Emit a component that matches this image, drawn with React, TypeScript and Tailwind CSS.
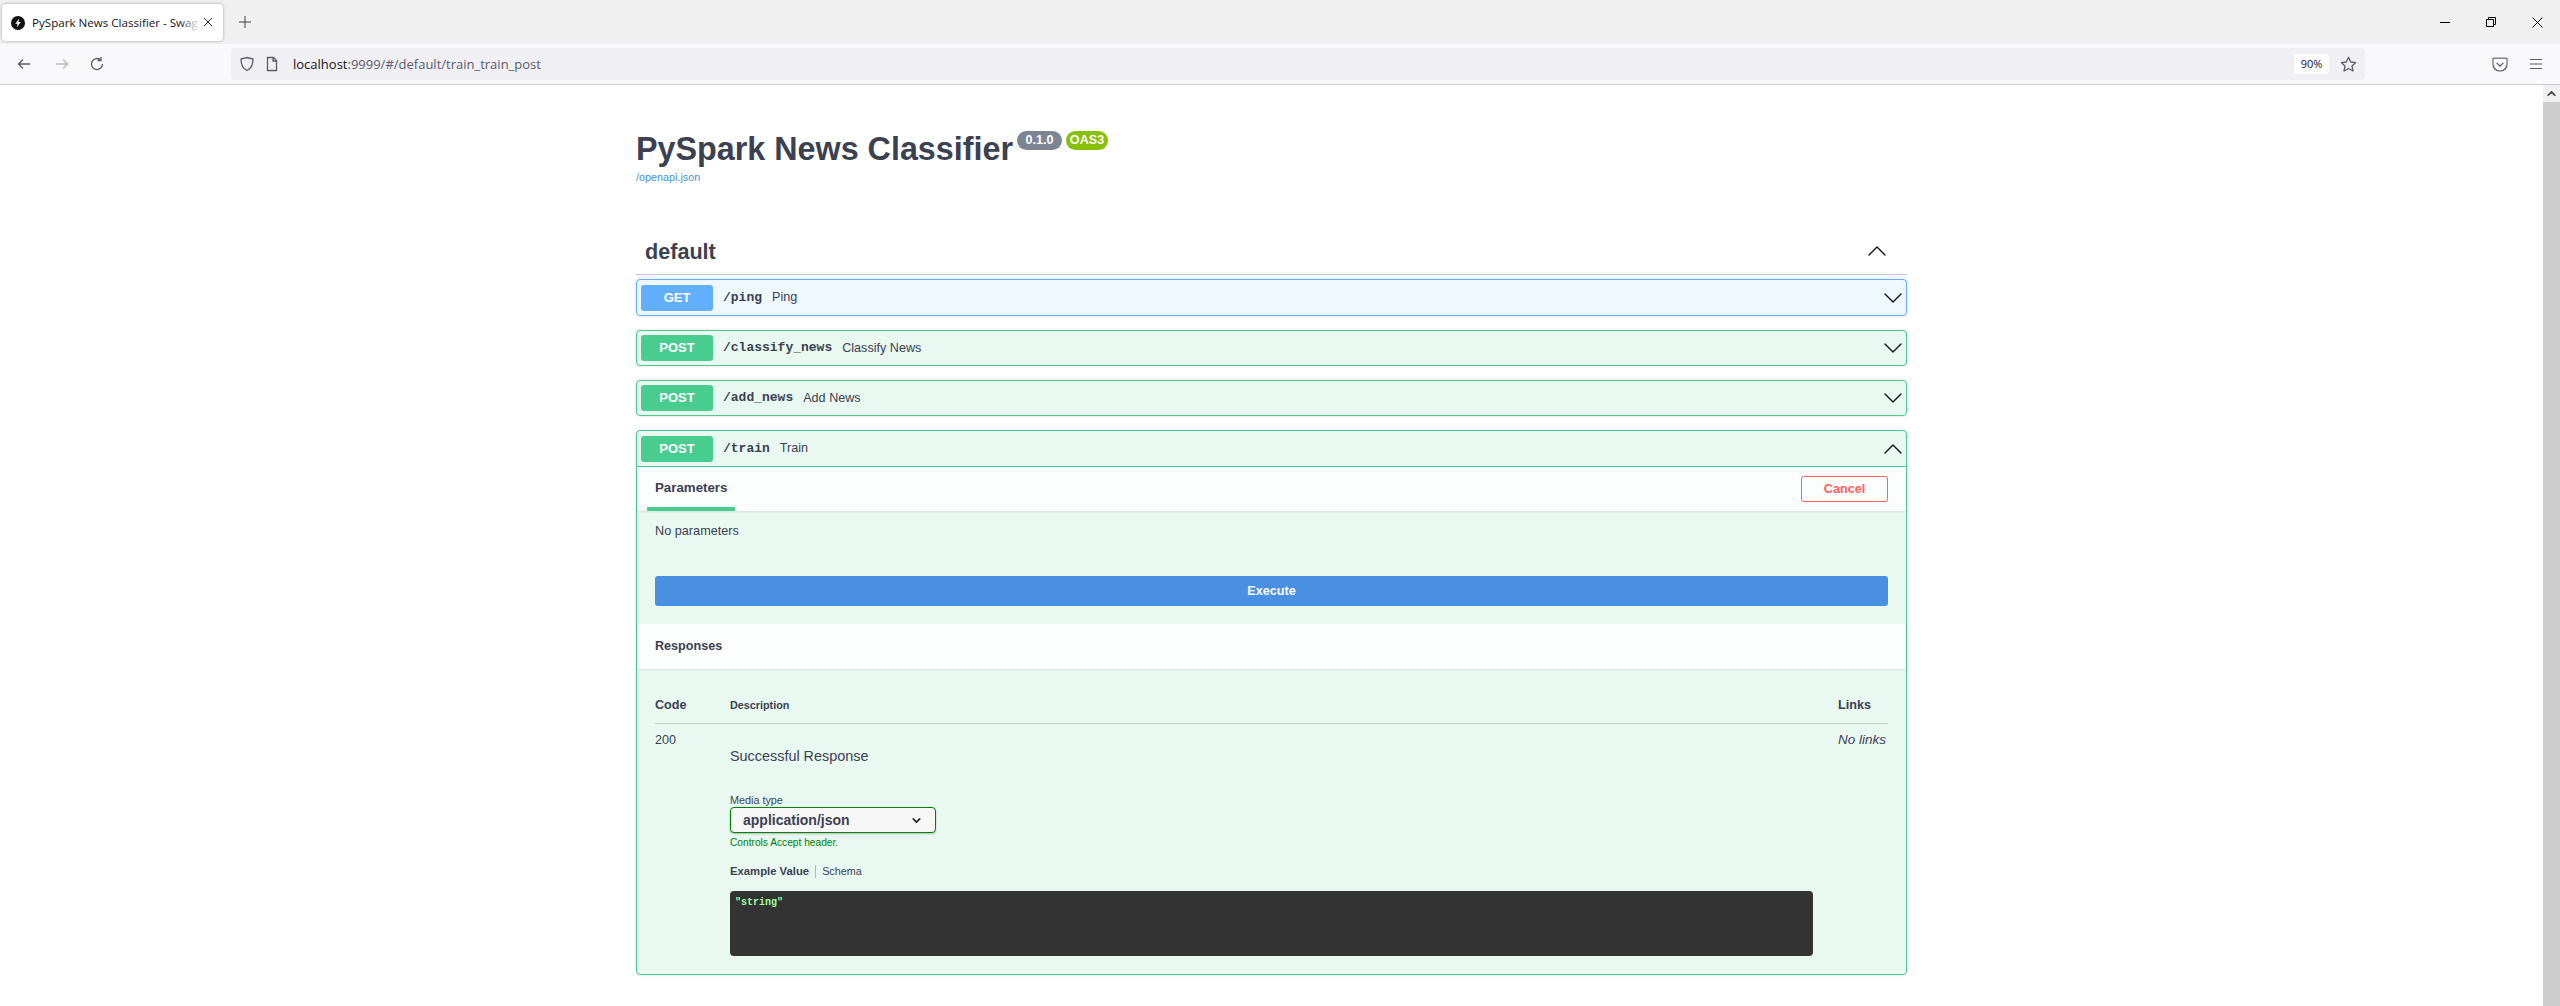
import { ChevronDown, ChevronUp } from "lucide-react";

const sans = "font-['Liberation_Sans',Arial,sans-serif]";
const ui = "font-['Open_Sans','Noto_Sans',sans-serif]";

function Favicon() {
  return (
    <svg width="14" height="14" viewBox="0 0 14 14" className="shrink-0">
      <circle cx="7" cy="7" r="7" fill="#111" />
      <path d="M8.2 2.4 4.2 7.8h2.4l-.9 3.8 4.1-5.5H7.4z" fill="#fff" />
    </svg>
  );
}

function BrowserChrome() {
  return (
    <div className="shrink-0">
      <div className="flex h-[44px] items-start bg-[#f0f0f0]">
        <div className="relative mt-[4px] ml-[2px] flex h-[37px] w-[221px] items-center rounded-[4px] bg-white pl-[9px] shadow-[0_0_3px_rgba(0,0,0,0.35)]">
          <Favicon />
          <span className={`ml-[7px] w-[168px] overflow-hidden text-[11.600px] whitespace-nowrap text-[#15141a] ${ui}`}>
            PySpark News Classifier - Swagger UI
          </span>
          <div className="absolute top-0 left-[178px] h-full w-[20px] bg-gradient-to-r from-transparent to-white" />
          <svg width="10" height="10" viewBox="0 0 10 10" className="absolute top-[13px] left-[201px]">
            <path d="M1 1l8 8M9 1l-8 8" stroke="#2b2a33" strokeWidth="1" fill="none" />
          </svg>
        </div>
        <svg width="12" height="12" viewBox="0 0 12 12" className="mt-[16px] ml-[16px]">
          <path d="M6 0v12M0 6h12" stroke="#444" strokeWidth="1" fill="none" />
        </svg>
        <div className="flex-1" />
        <div className="flex h-[44px] items-center">
          <div className="flex w-[46px] justify-center">
            <div className="h-px w-[10px] bg-black" />
          </div>
          <div className="flex w-[46px] justify-center">
            <svg width="10" height="10" viewBox="0 0 10 10">
              <path d="M.5 2.5h7v7h-7zM2.5 2.5v-2h7v7h-2" stroke="#000" fill="none" />
            </svg>
          </div>
          <div className="flex w-[46px] justify-center">
            <svg width="11" height="11" viewBox="0 0 11 11">
              <path d="M.5.5l10 10M10.5.5l-10 10" stroke="#000" fill="none" />
            </svg>
          </div>
        </div>
      </div>
      <div className="flex h-[41px] items-start border-b border-[#cccccc] bg-[#f9f9fb]">
        <div className="flex h-[40px] w-[231px] items-center">
          <svg width="16" height="16" viewBox="0 0 16 16" className="ml-[16px]">
            <path d="M14 8H2.5M7 3.5 2.5 8 7 12.500" stroke="#5b5b66" strokeWidth="1.300" fill="none" />
          </svg>
          <svg width="16" height="16" viewBox="0 0 16 16" className="ml-[22px]">
            <path d="M2 8h11.500M9 3.500 13.500 8 9 12.500" stroke="#b8b8bf" strokeWidth="1.300" fill="none" />
          </svg>
          <svg width="16" height="16" viewBox="0 0 16 16" className="ml-[19px]">
            <path d="M13.500 8A5.500 5.500 0 1 1 11.500 3.800M12 1v3.500H8.500" stroke="#5b5b66" strokeWidth="1.300" fill="none" />
          </svg>
        </div>
        <div className="mt-[4px] flex h-[32px] w-[2134px] items-center rounded-[4px] bg-[#f0f0f4]">
          <svg width="16" height="16" viewBox="0 0 16 16" className="ml-[8px]">
            <path d="M8 1.500 14 3c0 6-1.500 9.500-6 11.500C3.500 12.500 2 9 2 3z" stroke="#5b5b66" strokeWidth="1.300" fill="none" />
          </svg>
          <svg width="14" height="16" viewBox="0 0 14 16" className="ml-[10px]">
            <path d="M2.500 1.500h6l3 3v10h-9zM8 1.500V5h3.500" stroke="#5b5b66" strokeWidth="1.300" fill="none" />
          </svg>
          <span className={`mt-[1px] ml-[14px] text-[13px] text-[#5b5b66] ${ui}`}>
            <span className="text-[#15141a]">localhost</span>:9999/#/default/train_train_post
          </span>
          <div className="flex-1" />
          <span className={`flex h-[20px] w-[35px] items-center justify-center rounded-[3px] bg-white text-[11px] text-[#15141a] ${ui}`}>
            90%
          </span>
          <svg width="17" height="17" viewBox="0 0 17 17" className="mr-[8px] ml-[11px]">
            <path d="M8.500 1.300 10.700 6l5 .600-3.700 3.400 1 5-4.500-2.500L4 15l1-5-3.700-3.400 5-.600z" stroke="#5b5b66" strokeWidth="1.300" fill="none" strokeLinejoin="round" />
          </svg>
        </div>
        <div className="flex h-[40px] flex-1 items-center">
          <svg width="14" height="13" viewBox="0 0 14 13" className="ml-[128px] scale-[1.100]">
            <path d="M1.500.700h11a1 1 0 0 1 1 1V6A6.500 6.500 0 0 1 .5 6V1.700a1 1 0 0 1 1-1zM4 5l3 3 3-3" stroke="#5b5b66" strokeWidth="1.200" fill="none" />
          </svg>
          <svg width="14" height="12" viewBox="0 0 14 12" className="ml-[22px]">
            <path d="M1 1.500h12M1 6h12M1 10.500h12" stroke="#5b5b66" strokeWidth="1.200" fill="none" />
          </svg>
        </div>
      </div>
    </div>
  );
}

function OpRow({
  method,
  path,
  summary,
  open,
  className,
}: {
  method: string;
  path: string;
  summary: string;
  open?: boolean;
  className: string;
}) {
  const isGet = method === "GET";
  return (
    <div className={`flex items-center pl-[4px] ${className}`}>
      <span
        className={`flex h-[26px] w-[72px] items-center justify-center rounded-[3px] text-[13px] font-bold text-white ${
          isGet ? "bg-[#61affe]" : "bg-[#49cc90]"
        }`}
      >
        {method}
      </span>
      <span className="ml-[10px] font-['Liberation_Mono',monospace] text-[13px] font-bold text-[#3b4151]">{path}</span>
      <span className="ml-[10px] text-[12.600px] text-[#3b4151]">{summary}</span>
      <div className="flex-1" />
      {open ? (
        <ChevronUp size={32} strokeWidth={1} color="#111" className="-mr-[3px]" />
      ) : (
        <ChevronDown size={32} strokeWidth={1} color="#111" className="-mr-[3px]" />
      )}
    </div>
  );
}

function TrainPanel() {
  return (
    <div className="mt-[14px] rounded-[4px] border border-[#49cc90] bg-[#e9f9f2] shadow-[0_0_3px_rgba(0,0,0,0.15)]">
      <OpRow method="POST" path="/train" summary="Train" open className="h-[36px] border-b border-[#49cc90]" />
      <div className="flex h-[44px] items-stretch justify-between bg-[#fbfefd] pr-[18px] pl-[10px] shadow-[0_1px_2px_rgba(0,0,0,0.1)]">
        <div className="flex w-[88px] items-center border-b-[4px] border-[#49cc90] pt-[1px] pl-[8px] text-[13.300px] font-bold text-[#3b4151]">
          Parameters
        </div>
        <div className="flex items-center">
          <button className="h-[26px] w-[87px] rounded-[3px] border border-[#ff6060] bg-transparent text-[12.600px] font-bold text-[#ff6060]">
            Cancel
          </button>
        </div>
      </div>
      <div className="px-[18px]">
        <p className="pt-[12px] text-[12.700px] leading-[16px] text-[#3b4151]">No parameters</p>
        <button className="mt-[37px] mb-[18px] block h-[30px] w-full rounded-[3px] bg-[#4990e2] text-[12.600px] font-bold text-white">
          Execute
        </button>
      </div>
      <div className="flex h-[45px] items-center bg-[#fbfefd] pl-[18px] text-[12.600px] font-bold text-[#3b4151] shadow-[0_1px_2px_rgba(0,0,0,0.1)]">
        Responses
      </div>
      <div className="px-[18px] pb-[18px]">
        <div className="flex h-[55px] items-start border-b border-[#c8d2cd] pt-[27px] text-[#3b4151]">
          <span className="w-[75px] text-[12.600px] leading-[18px] font-bold">Code</span>
          <span className="flex-1 text-[10.800px] leading-[18px] font-bold">Description</span>
          <span className="w-[50px] text-[12.600px] leading-[18px] font-bold">Links</span>
        </div>
        <div className="flex pt-[8px] text-[#3b4151]">
          <span className="w-[75px] text-[12.600px] leading-[16px]">200</span>
          <div className="flex-1">
            <p className="mt-[16px] mb-0 text-[14.400px] leading-[16px]">Successful Response</p>
            <p className="mt-[30px] text-[10.800px] leading-[12px]">Media type</p>
            <div className="mt-px flex h-[26px] w-[206px] items-center justify-between rounded-[4px] border border-[#008000] bg-[#f7f7f7] pr-[12px] pl-[12px] shadow-[0_1px_2px_rgba(0,0,0,0.25)]">
              <span className="text-[14px] font-bold">application/json</span>
              <ChevronDown size={13} strokeWidth={3} color="#222" />
            </div>
            <p className="mt-[4px] text-[10.200px] leading-[12px] text-[#008000]">Controls Accept header.</p>
            <div className="mt-[14px] flex h-[16px] items-center">
              <span className="text-[11.300px] font-bold">Example Value</span>
              <div className="mx-[6px] h-[13px] w-px bg-[#b0b8b4]" />
              <span className="text-[10.800px]">Schema</span>
            </div>
            <div className="mt-[12px] h-[65px] w-[1083px] rounded-[4px] bg-[#333333] px-[5px] py-[6px] font-['Liberation_Mono',monospace] text-[10px] leading-[12px] font-bold text-[#a2fca2]">
              "string"
            </div>
          </div>
          <span className="w-[50px] text-[13.500px] leading-[16px] whitespace-nowrap italic">No links</span>
        </div>
      </div>
    </div>
  );
}

export default function App() {
  return (
    <div className={`flex h-[1006px] flex-col overflow-hidden bg-white ${sans}`}>
      <BrowserChrome />
      <div className="flex min-h-0 flex-1">
        <main className="min-w-0 flex-1">
          <div className="mx-auto w-[1271px] pt-[44px]">
            <div className="flex items-start">
              <h1 className="text-[32.300px] leading-[40px] font-bold text-[#3b4151]">PySpark News Classifier</h1>
              <span className="mt-[2px] ml-[4px] flex h-[19px] w-[45px] items-center justify-center rounded-full bg-[#7d8492] text-[12.600px] font-bold text-white">
                0.1.0
              </span>
              <span className="mt-[2px] ml-[4px] flex h-[19px] w-[42px] items-center justify-center rounded-full bg-[#89bf04] text-[12.600px] font-bold text-white">
                OAS3
              </span>
            </div>
            <p className="mt-px text-[10.800px] leading-[14px] text-[#4990e2]">/openapi.json</p>
            <div className="mt-[46px] flex h-[45px] items-center justify-between border-b border-[#c4c6cb] pr-[14px] pl-[9px]">
              <h2 className="text-[21.600px] font-bold text-[#3b4151]">default</h2>
              <ChevronUp size={32} strokeWidth={1} color="#111" className="mb-[3px]" />
            </div>
            <OpRow
              method="GET"
              path="/ping"
              summary="Ping"
              className="mt-[4px] h-[37px] rounded-[4px] border border-[#61affe] bg-[#eff7ff] shadow-[0_0_3px_rgba(0,0,0,0.15)]"
            />
            <OpRow
              method="POST"
              path="/classify_news"
              summary="Classify News"
              className="mt-[14px] h-[36px] rounded-[4px] border border-[#49cc90] bg-[#e9f9f2] shadow-[0_0_3px_rgba(0,0,0,0.15)]"
            />
            <OpRow
              method="POST"
              path="/add_news"
              summary="Add News"
              className="mt-[14px] h-[36px] rounded-[4px] border border-[#49cc90] bg-[#e9f9f2] shadow-[0_0_3px_rgba(0,0,0,0.15)]"
            />
            <TrainPanel />
          </div>
        </main>
        <div className="flex w-[17px] shrink-0 flex-col bg-[#cdcdcd]">
          <div className="flex h-[17px] items-center justify-center bg-[#f0f0f0]">
            <ChevronUp size={13} strokeWidth={3.500} color="#505050" />
          </div>
        </div>
      </div>
    </div>
  );
}
